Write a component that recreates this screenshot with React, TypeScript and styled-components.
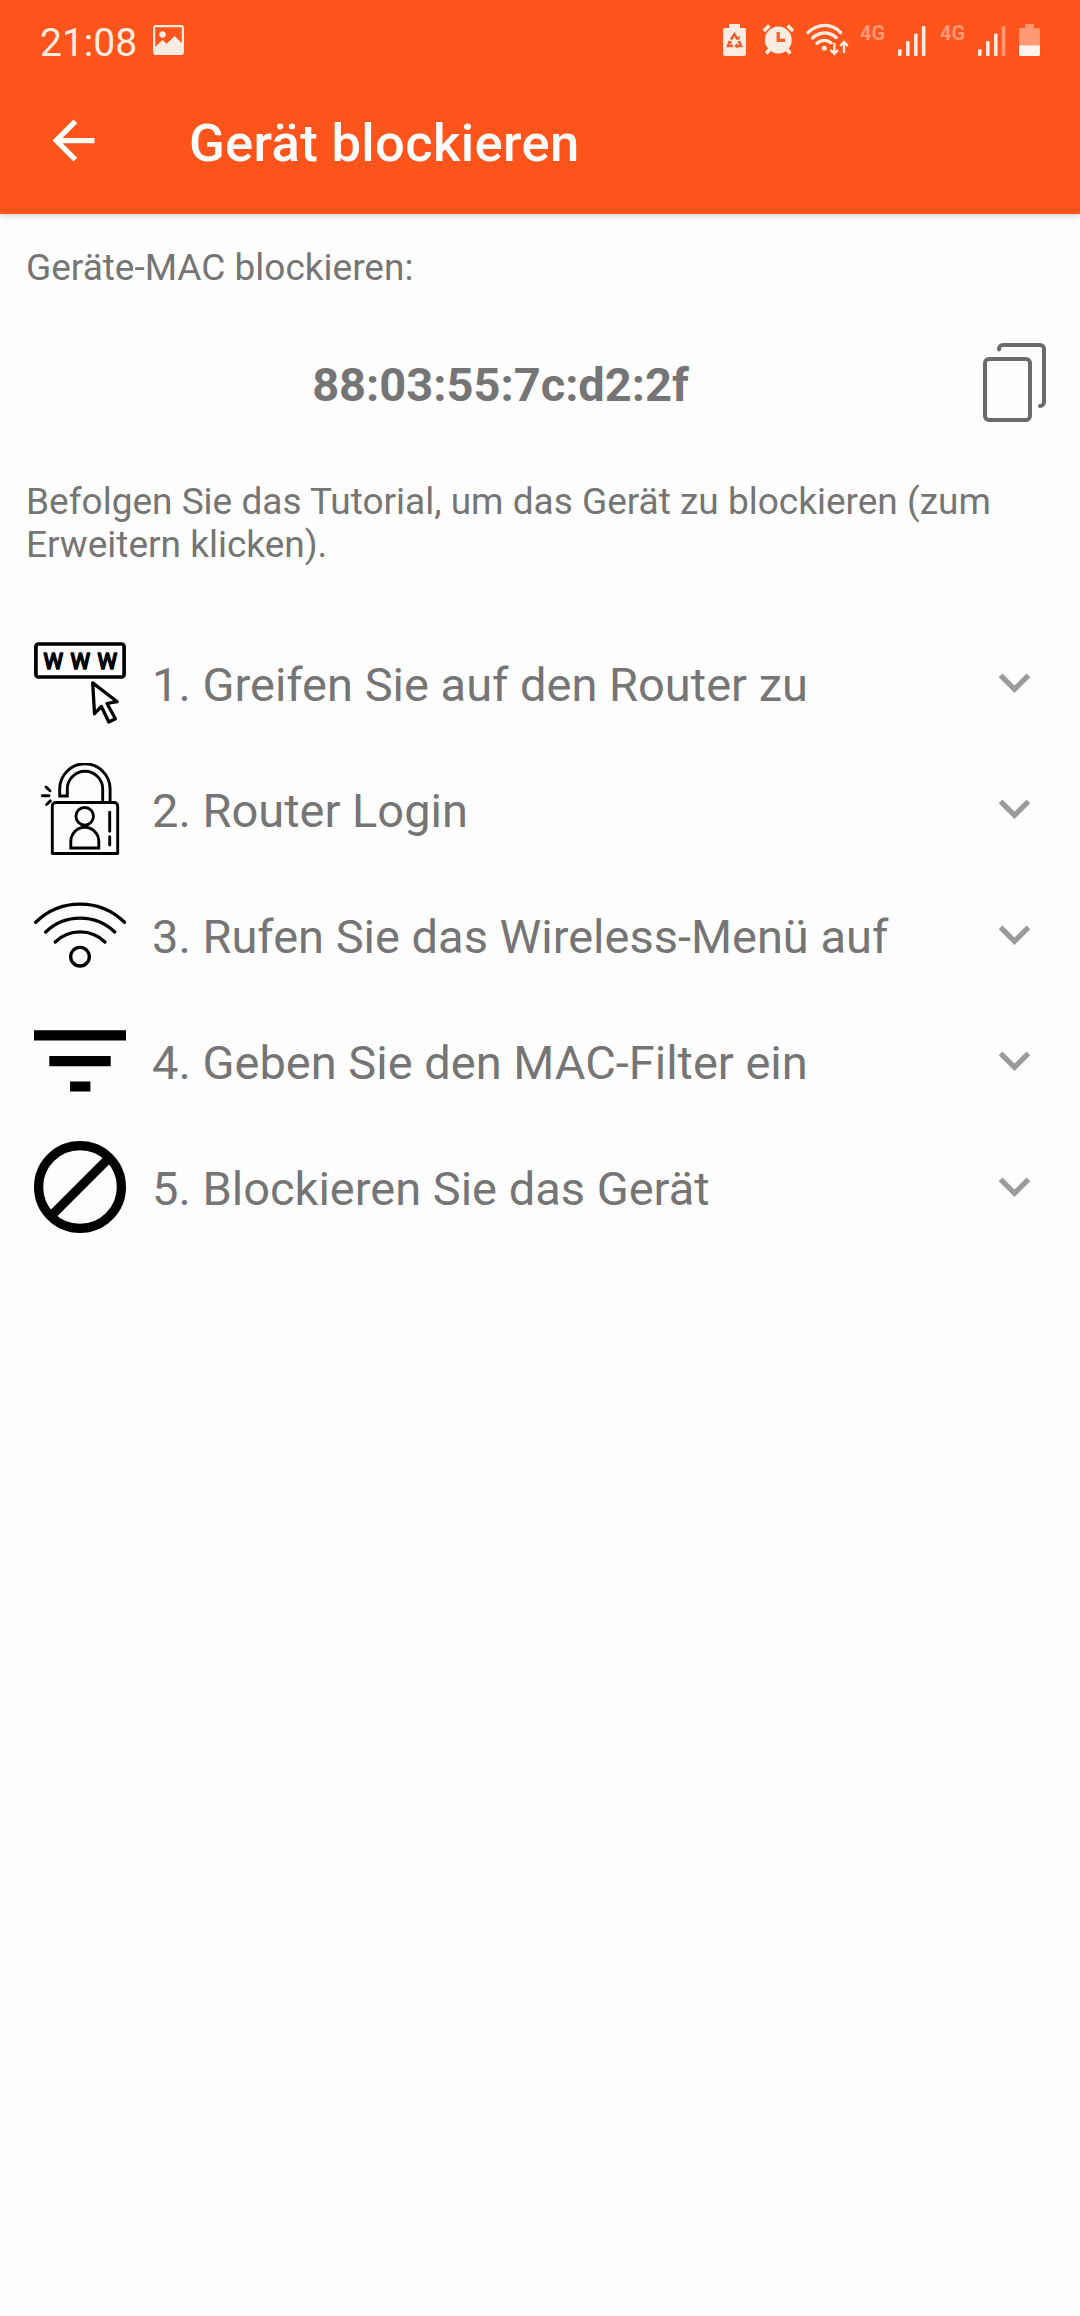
import React from "react";
import styled, { createGlobalStyle } from "styled-components";

const GlobalStyle = createGlobalStyle`
  * { box-sizing: border-box; }
  body { margin: 0; background: #fefefe; font-family: Roboto, "Liberation Sans", sans-serif; }
  h1, p, ol { margin: 0; padding: 0; }
  svg { display: block; flex: none; }
`;

const Screen = styled.div`
  display: flex;
  flex-direction: column;
  width: 1080px;
  height: 2316px;
  background: #fefefe;
  color: #757575;
`;

const Header = styled.header`
  height: 214px;
  background: #ff541b;
  box-shadow: 0 1px 7px rgba(40, 70, 80, 0.3);
`;

const StatusBar = styled.div`
  display: flex;
  justify-content: space-between;
  height: 67px;
  padding: 18px 40px 0;
  color: #ffece0;
`;

const StatusGroup = styled.div`
  display: flex;
  align-items: flex-start;
`;

const Clock = styled.span`
  width: 113px;
  padding-top: 2px;
  font-size: 39px;
  line-height: 46px;
`;

const NetworkType = styled.span`
  width: 38px;
  padding-top: 3px;
  font-size: 20px;
  line-height: 24px;
  font-weight: 700;
  color: #ff9873;
`;

const AppBar = styled.div`
  display: flex;
  align-items: center;
  height: 147px;
  padding-left: 42px;
  color: #fff;
`;

const BackButton = styled.button`
  margin: 0 84px 0 0;
  padding: 0;
  border: 0;
  background: none;
  color: inherit;
`;

const Title = styled.h1`
  padding-top: 4px;
  font-size: 52.5px;
  line-height: 62px;
  font-weight: 500;
  letter-spacing: 0.36px;
  white-space: nowrap;
`;

const Content = styled.main`
  display: flex;
  flex-direction: column;
  padding: 32px 34px 0 26px;
`;

const Note = styled.p`
  font-size: 37px;
  line-height: 43px;
`;

const MacRow = styled.div`
  display: flex;
  align-items: flex-start;
  height: 79px;
  margin: 54px 0 58px;
`;

const Mac = styled.span`
  flex: 1;
  padding: 14px 8px 0 0;
  font-size: 47px;
  line-height: 56px;
  font-weight: 700;
  text-align: center;
`;

const Steps = styled.ol`
  display: flex;
  flex-direction: column;
  margin-top: 54px;
  list-style: none;
`;

const StepRow = styled.li`
  display: flex;
  align-items: center;
  height: 126px;
  padding-left: 8px;
  color: #000;
`;

const StepLabel = styled.span`
  flex: 1;
  padding: 4px 0 0 26px;
  font-size: 47px;
  line-height: 56px;
  color: #757575;
  white-space: nowrap;
`;

const strokeProps = {
  fill: "none",
  stroke: "currentColor",
  strokeLinecap: "round" as const,
  strokeLinejoin: "round" as const,
};

const PictureIcon = () => (
  <svg width="31" height="38" viewBox="0 0 31 38" fill="currentColor">
    <path fillRule="evenodd" d="M3 7h25a3 3 0 0 1 3 3v24a3 3 0 0 1-3 3H3a3 3 0 0 1-3-3V10a3 3 0 0 1 3-3ZM2.2 9.2v19.6l7.4-6.8 4 3.8 8-7.8 7.2 7.2V9.2Z" />
    <circle cx="9.5" cy="16.5" r="3.2" />
  </svg>
);

const RecycleBatteryIcon = () => (
  <svg width="39" height="38" viewBox="0 0 39 38" fill="currentColor">
    <path d="M6 6h11v4h4a2 2 0 0 1 2 2v24a2 2 0 0 1-2 2H2a2 2 0 0 1-2-2V12a2 2 0 0 1 2-2h4Z" />
    <g fill="none" stroke="#e8602f" strokeWidth="2.6">
      <path d="m8 21.500 3.400-5.200 3.200 5" />
      <path d="m15.800 23 2.200 5h-5" />
      <path d="M10 28H5l2-5" />
    </g>
    <path d="M12.500 21.500h4.200v-4zM14.500 25v5.800l-3.200-2.900zM4.200 23.500l4-.6 1 3.600z" fill="#e8602f" />
  </svg>
);

const AlarmIcon = () => (
  <svg width="44" height="38" viewBox="0 0 44 38" fill="currentColor">
    <circle cx="16.300" cy="22" r="13.400" />
    <path
      d="m1.800 13 5.400-5.400M31 13l-5.400-5.400M7.500 31.500l-3.300 4M25 31.500l3.300 4"
      fill="none"
      stroke="currentColor"
      strokeWidth="3.600"
    />
    <path d="M16.200 14v8.300h7" fill="none" stroke="#f0602b" strokeWidth="3.200" />
  </svg>
);

const WifiStatusIcon = () => (
  <svg width="54" height="38" viewBox="0 0 54 38" fill="currentColor">
    <g {...strokeProps} strokeWidth="3.400">
      <path d="M2 14.500C12 5 26 5 34.500 14.500" />
      <path d="M6.500 20C13.500 13.500 23.500 13.500 30 19.500" />
      <path d="M11 25.300C15 21.500 21 21.500 25 24.800" />
    </g>
    <circle cx="18.300" cy="30.300" r="2.500" />
    <path
      d="M28.300 25v10.500M24.500 31.800l3.800 4 3.800-4M38 35V24.500M34.200 28l3.800-4 3.800 4"
      fill="none"
      stroke="currentColor"
      strokeWidth="2.400"
    />
  </svg>
);

const SignalIcon = ({ weak }: { weak?: boolean }) => (
  <svg width={weak ? 41 : 42} height="38" viewBox={weak ? "0 0 41 38" : "0 0 42 38"} fill="currentColor">
    <rect x="0" y="31.300" width="3.600" height="6.700" rx="1" />
    <rect x="8" y="23" width="3.600" height="15" rx="1" />
    <rect x="16" y="15.500" width="3.600" height="22.500" rx="1" />
    <rect x="23.800" y="8" width="3.600" height="30" rx="1" fill={weak ? "#ff9873" : "currentColor"} />
  </svg>
);

const BatteryIcon = () => (
  <svg width="21" height="38" viewBox="0 0 21 38">
    <path d="M6 6h9v4h4.500a1.500 1.500 0 0 1 1.500 1.500V28H0V11.500A1.500 1.500 0 0 1 1.500 10H6Z" fill="#ff9873" />
    <path d="M0 27.500h21v9a1.500 1.500 0 0 1-1.500 1.500h-18A1.500 1.500 0 0 1 0 36.500Z" fill="#fff4ee" />
  </svg>
);

const BackIcon = () => (
  <svg width="63" height="63" viewBox="0 0 24 24" fill="currentColor">
    <path d="M20 11H7.830l5.590-5.590L12 4l-8 8 8 8 1.410-1.410L7.830 13H20z" />
  </svg>
);

const CopyIcon = () => (
  <svg width="63" height="79" viewBox="0 0 63 79" {...strokeProps} stroke="#6b6b6b" strokeWidth="4">
    <rect x="2" y="16" width="45" height="61" rx="4" />
    <path d="M16 6.500V6a4 4 0 0 1 4-4h37a4 4 0 0 1 4 4v53a4 4 0 0 1-4 4" />
  </svg>
);

const ChevronIcon = () => (
  <svg width="63" height="65" viewBox="0 0 24 24.760" fill="#9b9b9b">
    <path d="M16.590 8.590 12 13.170 7.410 8.590 6 10l6 6 6-6z" />
  </svg>
);

const WebIcon = () => (
  <svg width="92" height="92" viewBox="0 0 92 92" {...strokeProps} strokeWidth="3.700">
    <rect x="1.900" y="7" width="88.200" height="33" rx="2.500" />
    <text x="9.400 36.400 63.400" y="32" fontFamily="Roboto, sans-serif" fontSize="22" fontWeight="400" fill="currentColor" strokeWidth="1.700">WWW</text>
    <path d="m58.700 45.900 24.500 18.800-10.200 1.800 8.400 15.200-6.600 3.300-7.400-15.500-6.900 7.200Z" strokeWidth="3.300" />
  </svg>
);

const LoginIcon = () => (
  <svg width="92" height="92" viewBox="0 0 92 92" {...strokeProps} strokeWidth="2.900">
    <path d="M18.300 90.500V43a3.500 3.500 0 0 1 3.500-3.500h58.400a3.500 3.500 0 0 1 3.500 3.500v47.500Z" />
    <path d="M68.700 39.500V26a17.700 17.700 0 0 0-35.400 0v7h-7.600v-7a25.200 25.200 0 0 1 50.400 0v13.500" strokeLinejoin="miter" />
    <circle cx="50.700" cy="53.300" r="8.800" />
    <path d="M36.800 85v-6.700a14 14 0 0 1 28 0V85Z" strokeLinejoin="miter" />
    <path d="M75.700 49.300v19M75.700 73.800V82M12 24l4 3.800M8.300 32.700H15M12.600 41.500l3.800-3.600" />
  </svg>
);

const WirelessIcon = () => (
  <svg width="92" height="92" viewBox="0 0 92 92" {...strokeProps} strokeWidth="3.300">
    <path d="M1.700 33.300a63.300 63.300 0 0 1 88.800 0M11.700 43a50 50 0 0 1 69 0M21.300 53a35.500 35.500 0 0 1 49.600 0" />
    <circle cx="46" cy="67.700" r="9.300" />
  </svg>
);

const FilterIcon = () => (
  <svg width="92" height="92" viewBox="0 0 92 92" fill="currentColor">
    <path d="M0 15.300h92v10.200H0zM15.300 41h61.400v10.200H15.300zM36 66.400h20.400v10.200H36z" />
  </svg>
);

const BlockIcon = () => (
  <svg width="92" height="92" viewBox="0 0 92 92" fill="none" stroke="currentColor" strokeWidth="9.200">
    <circle cx="46" cy="46" r="41.400" />
    <path d="M17 75 75 17" />
  </svg>
);

const steps = [
  { Icon: WebIcon, label: "1. Greifen Sie auf den Router zu" },
  { Icon: LoginIcon, label: "2. Router Login" },
  { Icon: WirelessIcon, label: "3. Rufen Sie das Wireless-Menü auf" },
  { Icon: FilterIcon, label: "4. Geben Sie den MAC-Filter ein" },
  { Icon: BlockIcon, label: "5. Blockieren Sie das Gerät" },
];

export default function App() {
  return (
    <>
      <GlobalStyle />
      <Screen>
        <Header>
          <StatusBar>
            <StatusGroup>
              <Clock>21:08</Clock>
              <PictureIcon />
            </StatusGroup>
            <StatusGroup>
              <RecycleBatteryIcon />
              <AlarmIcon />
              <WifiStatusIcon />
              <NetworkType>4G</NetworkType>
              <SignalIcon />
              <NetworkType>4G</NetworkType>
              <SignalIcon weak />
              <BatteryIcon />
            </StatusGroup>
          </StatusBar>
          <AppBar>
            <BackButton aria-label="Zurück">
              <BackIcon />
            </BackButton>
            <Title>Gerät blockieren</Title>
          </AppBar>
        </Header>
        <Content>
          <Note>Geräte-MAC blockieren:</Note>
          <MacRow>
            <Mac>88:03:55:7c:d2:2f</Mac>
            <CopyIcon />
          </MacRow>
          <Note>Befolgen Sie das Tutorial, um das Gerät zu blockieren (zum Erweitern klicken).</Note>
          <Steps>
            {steps.map(({ Icon, label }) => (
              <StepRow key={label}>
                <Icon />
                <StepLabel>{label}</StepLabel>
                <ChevronIcon />
              </StepRow>
            ))}
          </Steps>
        </Content>
      </Screen>
    </>
  );
}
